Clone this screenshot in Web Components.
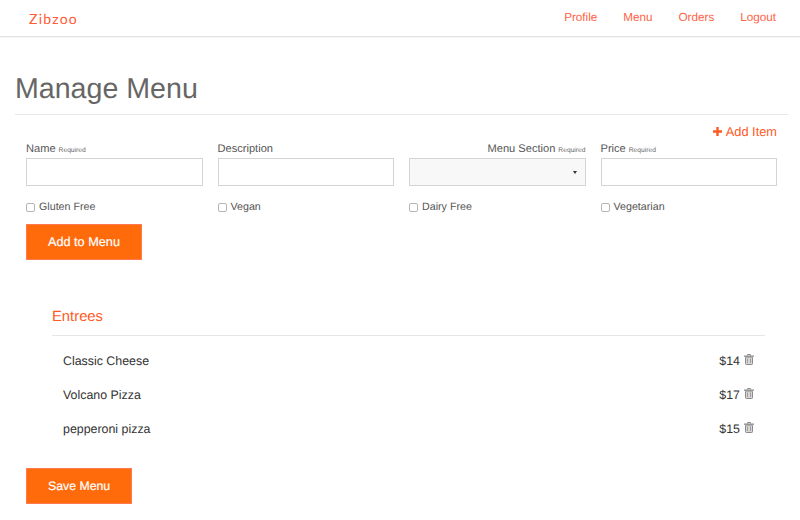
<!DOCTYPE html>
<html>
<head>
<meta charset="utf-8">
<title>Zibzoo</title>
<style>
  html, body { margin: 0; padding: 0; background: #fff; }
  body { font-family: "Liberation Sans", Arial, sans-serif; font-size: 12px; color: #555; text-rendering: geometricPrecision; }
</style>
</head>
<body>
<zz-navbar brand="Zibzoo">
  <a href="#">Profile</a>
  <a href="#">Menu</a>
  <a href="#">Orders</a>
  <a href="#">Logout</a>
</zz-navbar>
<zz-manage-menu></zz-manage-menu>

<script>
// top bar, links come in through the slot
class ZzNavbar extends HTMLElement {
  constructor() {
    super();
    this._root = this.attachShadow({ mode: 'open' });
  }
  connectedCallback() {
    this._root.innerHTML = `
      <style>
        :host { display: flex; justify-content: space-between; align-items: center; height: 36px; padding: 0 24px 0 29px; border-bottom: 1px solid #e3e3e3; box-shadow: 0 1px 1px rgba(0,0,0,.03); }
        .brand { font: 14px Lato, "Liberation Sans", sans-serif; letter-spacing: 1.25px; color: #ff5a36; }
        nav { display: flex; gap: 26px; padding-bottom: 2px; }
        ::slotted(a) { font-size: 11.7px; color: #ff6347; text-decoration: none; }
      </style>
      <span class="brand">${this.getAttribute('brand')}</span>
      <nav><slot></slot></nav>
    `;
  }
}

// label + input (or select when type="select")
class ZzField extends HTMLElement {
  constructor() {
    super();
    this._root = this.attachShadow({ mode: 'open' });
  }
  connectedCallback() {
    const isSelect = this.getAttribute('type') === 'select';
    const required = this.hasAttribute('required');
    this._root.innerHTML = `
      <style>
        :host { display: block; }
        .label { display: flex; align-items: baseline; gap: 3px; box-sizing: border-box; height: 16px; padding-top: 1px; font-size: 11.1px; color: #555; }
        :host([type="select"]) .label { justify-content: flex-end; }
        small { font-size: 6.7px; color: #666; }
        .box { box-sizing: border-box; display: block; width: 100%; height: 28px; border: 1px solid #d4d4d4; background: #fff; position: relative; }
        :host([type="select"]) .box { background: #f8f8f8; }
        .caret { position: absolute; right: 8px; top: 12px; width: 0; height: 0; border: 2.5px solid transparent; border-top: 3px solid #333; border-bottom: 0; }
      </style>
      <div class="label"><span>${this.getAttribute('label')}</span>${required ? '<small>Required</small>' : ''}</div>
      ${isSelect ? '<div class="box"><span class="caret"></span></div>' : '<input class="box">'}
    `;
  }
}

class ZzCheck extends HTMLElement {
  constructor() {
    super();
    this._root = this.attachShadow({ mode: 'open' });
  }
  connectedCallback() {
    this._root.innerHTML = `
      <style>
        :host { display: flex; align-items: center; gap: 4px; font-size: 10.7px; color: #555; height: 14px; }
        i { display: block; box-sizing: border-box; width: 9px; height: 9px; border: 1px solid #b5b5b5; border-radius: 2px; background: #fff; }
      </style>
      <i></i><span><slot></slot></span>
    `;
  }
}

class ZzButton extends HTMLElement {
  constructor() {
    super();
    this._root = this.attachShadow({ mode: 'open' });
  }
  connectedCallback() {
    this._root.innerHTML = `
      <style>
        :host { display: inline-flex; box-sizing: border-box; height: 36px; padding: 0 21px; align-items: center; background: #ff6a0a; border: 1px solid #ff7a50; color: #fff; font-size: var(--btn-size, 12.7px); -webkit-text-stroke: .2px #fff; }
      </style>
      <slot></slot>
    `;
  }
}

class ZzMenuItem extends HTMLElement {
  constructor() {
    super();
    this._root = this.attachShadow({ mode: 'open' });
  }
  connectedCallback() {
    this._root.innerHTML = `
      <style>
        :host { display: flex; justify-content: space-between; align-items: center; height: 34px; padding: 0 11px; font-size: 12.4px; color: #333; }
        .right { display: flex; align-items: center; gap: 4px; }
        svg { display: block; margin-top: -3px; }
      </style>
      <span><slot></slot></span>
      <span class="right">
        <span>${this.getAttribute('price')}</span>
        <svg width="10" height="11" viewBox="0 0 10 11">
          <path fill="none" stroke="#8a8a8a" d="M3.500 1.500v-1h3v1"/>
          <path fill="#8a8a8a" d="M0 1.500h10v1.300H0z"/>
          <rect x="1.500" y="3" width="7" height="7.500" rx=".8" fill="#d6d6d6" stroke="#8a8a8a"/>
          <path stroke="#a0a0a0" d="M3.500 4.500v4.500M6.500 4.500v4.500"/>
        </svg>
      </span>
    `;
  }
}

class ZzMenuSection extends HTMLElement {
  constructor() {
    super();
    this._root = this.attachShadow({ mode: 'open' });
  }
  connectedCallback() {
    this._root.innerHTML = `
      <style>
        :host { display: block; margin: 0 20px 0 37px; }
        h2 { margin: 0 0 8px; padding-bottom: 9px; border-bottom: 1px solid #e6e6e6; font-size: 14.800px; line-height: 18px; font-weight: 400; color: #ff5a26; }
      </style>
      <h2>${this.getAttribute('title')}</h2>
      <slot></slot>
    `;
  }
}

// the page itself
class ZzManageMenu extends HTMLElement {
  constructor() {
    super();
    this._root = this.attachShadow({ mode: 'open' });
  }
  connectedCallback() {
    this._root.innerHTML = `
      <style>
        :host { display: block; padding: 0 15px; }
        h1 { margin: 0 -3px 0 0; padding: 34px 0 7px; border-bottom: 1px solid #e8e8e8; font-size: 28.600px; line-height: 36px; font-weight: 400; color: #666; }
        .add { display: flex; justify-content: flex-end; align-items: center; gap: 4px; height: 27px; margin-right: 8px; padding-top: 5px; box-sizing: border-box; font-size: 12.800px; color: #ff5a26; }
        .form { padding: 0 8px 0 11px; }
        .row { display: grid; grid-template-columns: repeat(4, 1fr); column-gap: 15px; }
        .checks { margin-top: 14px; }
        .submit { margin-top: 10px; }
        zz-menu-section { margin-top: 48px; }
        .save { margin: 22px 0 0 11px; --btn-size: 12.300px; }
        .submit, .save { display: block; }
      </style>
      <h1>Manage Menu</h1>
      <div class="add">
        <svg width="9" height="9" viewBox="0 0 9 9"><path fill="#ff5a26" d="M3.300 0h2.400v3.300H9v2.400H5.700V9H3.300V5.700H0V3.300h3.300z"/></svg>
        <span>Add Item</span>
      </div>
      <div class="form">
        <div class="row">
          <zz-field label="Name" required></zz-field>
          <zz-field label="Description"></zz-field>
          <zz-field label="Menu Section" type="select" required></zz-field>
          <zz-field label="Price" required></zz-field>
        </div>
        <div class="row checks">
          <zz-check>Gluten Free</zz-check>
          <zz-check>Vegan</zz-check>
          <zz-check>Dairy Free</zz-check>
          <zz-check>Vegetarian</zz-check>
        </div>
        <div class="submit"><zz-button>Add to Menu</zz-button></div>
      </div>
      <zz-menu-section title="Entrees">
        <zz-menu-item price="$14">Classic Cheese</zz-menu-item>
        <zz-menu-item price="$17">Volcano Pizza</zz-menu-item>
        <zz-menu-item price="$15">pepperoni pizza</zz-menu-item>
      </zz-menu-section>
      <div class="save"><zz-button>Save Menu</zz-button></div>
    `;
  }
}

window.customElements.define('zz-navbar', ZzNavbar);
window.customElements.define('zz-field', ZzField);
window.customElements.define('zz-check', ZzCheck);
window.customElements.define('zz-button', ZzButton);
window.customElements.define('zz-menu-item', ZzMenuItem);
window.customElements.define('zz-menu-section', ZzMenuSection);
window.customElements.define('zz-manage-menu', ZzManageMenu);
</script>
</body>
</html>
